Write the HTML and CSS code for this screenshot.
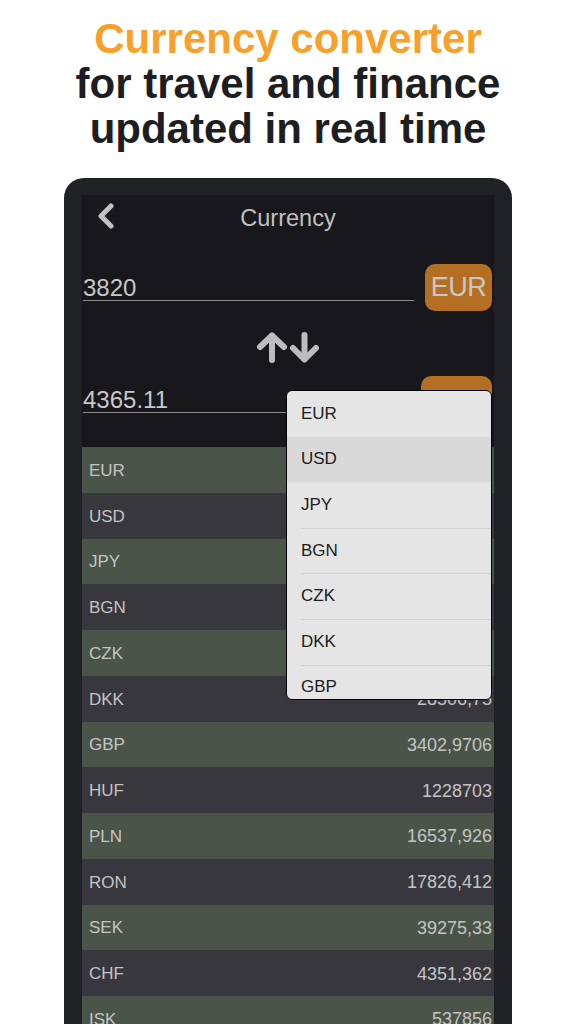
FILE: index.html
```
<!DOCTYPE html>
<html lang="en">
<head>
<meta charset="utf-8">
<title>Currency converter</title>
<link rel="stylesheet" href="styles.css">
</head>
<body>
<header class="headline">
  <div class="accent">Currency converter</div>
  <div>for travel and finance</div>
  <div>updated in real time</div>
</header>
<div class="phone">
  <div class="screen">
    <div class="nav">
      <div class="nav-left">
        <svg class="back" width="20" height="26" viewBox="0 0 20 26"><path d="M15 3 L5 13 L15 23" fill="none" stroke="#c2c2c2" stroke-width="5" stroke-linecap="round" stroke-linejoin="round"/></svg>
      </div>
      <div class="title">Currency</div>
      <div></div>
    </div>
    <div class="converter">
      <div class="field-row">
        <div class="field">3820</div>
        <div class="cur-btn">EUR</div>
      </div>
      <div class="swap">
        <svg width="66" height="33" viewBox="0 0 66 33">
          <g fill="none" stroke="#bdbdbd" stroke-width="6" stroke-linecap="round" stroke-linejoin="round">
            <path d="M17 29 L17 5"/>
            <path d="M5 16 L17 4.5 L29 16"/>
            <path d="M49.5 4 L49.5 28"/>
            <path d="M38 17 L49.5 28.5 L61 17"/>
          </g>
        </svg>
      </div>
      <div class="field-row">
        <div class="field">4365.11</div>
        <div class="cur-btn wide">USD</div>
      </div>
    </div>
    <div class="list">
      <div class="row g"><span>EUR</span><span class="val">3820</span></div>
      <div class="row d"><span>USD</span><span class="val">4365,11</span></div>
      <div class="row g"><span>JPY</span><span class="val">493078,6</span></div>
      <div class="row d"><span>BGN</span><span class="val">7471,21</span></div>
      <div class="row g"><span>CZK</span><span class="val">95660,5</span></div>
      <div class="row d"><span>DKK</span><span class="val">28506,75</span></div>
      <div class="row g"><span>GBP</span><span class="val">3402,9706</span></div>
      <div class="row d"><span>HUF</span><span class="val">1228703</span></div>
      <div class="row g"><span>PLN</span><span class="val">16537,926</span></div>
      <div class="row d"><span>RON</span><span class="val">17826,412</span></div>
      <div class="row g"><span>SEK</span><span class="val">39275,33</span></div>
      <div class="row d"><span>CHF</span><span class="val">4351,362</span></div>
      <div class="row g"><span>ISK</span><span class="val">537856</span></div>
    </div>
    <div class="dropdown">
      <div class="opt">EUR</div>
      <div class="opt sel">USD</div>
      <div class="opt">JPY</div>
      <div class="opt sep">BGN</div>
      <div class="opt sep">CZK</div>
      <div class="opt sep">DKK</div>
      <div class="opt sep">GBP</div>
    </div>
  </div>
</div>
</body>
</html>
```
FILE: styles.css
```
html, body {
  margin: 0;
  padding: 0;
}
body {
  background: #ffffff;
  font-family: "Liberation Sans", Arial, sans-serif;
  height: 1024px;
  overflow: hidden;
}
.headline {
  padding-top: 16px;
  text-align: center;
  font-weight: bold;
  font-size: 42px;
  line-height: 45px;
  color: #1d1e22;
}
.headline .accent {
  color: #f7a12b;
}
.phone {
  margin: 27px 0 0 64px;
  width: 448px;
  box-sizing: border-box;
  padding: 17px 18px 0 18px;
  background: #202125;
  border-radius: 20px 20px 0 0;
  height: 860px;
}
.screen {
  position: relative;
  background: #17171c;
  height: 100%;
}
.nav {
  height: 46px;
  display: grid;
  grid-template-columns: 1fr auto 1fr;
  align-items: center;
}
.nav-left {
  padding-left: 14px;
  display: flex;
  align-items: center;
  height: 100%;
  padding-bottom: 4px;
  box-sizing: border-box;
}
.back {
  display: block;
}
.title {
  font-size: 23.5px;
  color: #c0c0c0;
}
.converter {
  padding: 23px 2px 0 1px;
}
.field-row {
  display: flex;
  height: 47px;
}
.field {
  flex: 1;
  height: 36px;
  margin-right: 11px;
  border-bottom: 1px solid #8d8d8d;
  display: flex;
  align-items: flex-end;
  font-size: 24px;
  line-height: 1;
  color: #c8c8c8;
}
.cur-btn {
  width: 67px;
  height: 47px;
  box-sizing: border-box;
  border-radius: 10px;
  background: #b46f22;
  color: #c8c8c8;
  font-size: 27px;
  letter-spacing: -0.5px;
  display: flex;
  align-items: center;
  justify-content: center;
}
.cur-btn.wide {
  width: 71px;
  padding-top: 10px;
}
.swap {
  height: 65px;
  box-sizing: border-box;
  padding-top: 20px;
  display: flex;
  justify-content: center;
}
.swap svg {
  display: block;
}
.list {
  margin-top: 24px;
}
.row {
  height: 45.75px;
  box-sizing: border-box;
  display: flex;
  align-items: center;
  justify-content: space-between;
  padding: 2px 2px 0 7px;
  color: #c4c4c4;
  font-size: 17px;
}
.row .val {
  font-size: 18px;
}
.row.g {
  background: #4a5449;
}
.row.d {
  background: #38373d;
}
.dropdown {
  position: absolute;
  left: 204px;
  top: 195px;
  width: 206px;
  height: 310px;
  box-sizing: border-box;
  border: 1.5px solid #000;
  border-radius: 6px;
  background: #e5e5e5;
  overflow: hidden;
}
.opt {
  position: relative;
  height: 45.6px;
  display: flex;
  align-items: center;
  padding-left: 14px;
  font-size: 17px;
  color: #1c1c1c;
}
.opt.sel {
  background: #d9d9d9;
}
.opt.sep::before {
  content: "";
  position: absolute;
  left: 14px;
  right: 0;
  top: 0;
  height: 1px;
  background: #d2d2d2;
}
```
